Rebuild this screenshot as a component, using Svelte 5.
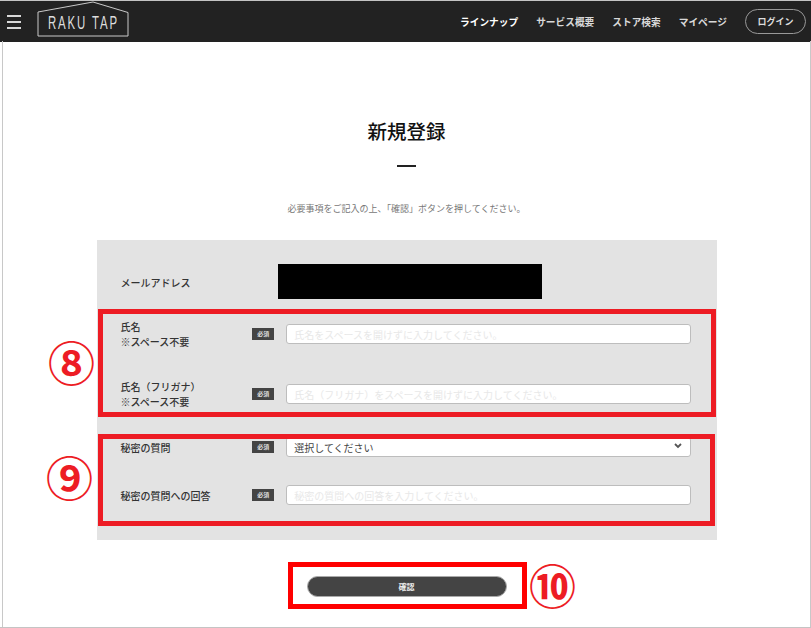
<script lang="ts">
  type Field = {
    label: string;
    note?: string;
    placeholder?: string;
    kind?: 'select';
  };

  const nav = ['ラインナップ', 'サービス概要', 'ストア検索', 'マイページ'];

  const fields: Field[] = [
    { label: '氏名', note: '※スペース不要', placeholder: '氏名をスペースを開けずに入力してください。' },
    { label: '氏名（フリガナ）', note: '※スペース不要', placeholder: '氏名（フリガナ）をスペースを開けずに入力してください。' },
    { label: '秘密の質問', kind: 'select', placeholder: '選択してください' },
    { label: '秘密の質問への回答', placeholder: '秘密の質問への回答を入力してください。' }
  ];
</script>

<div class="page">
  <header class="topbar">
    <button class="menu" aria-label="メニュー">
      <span></span><span></span><span></span>
    </button>
    <div class="logo">
      <svg width="92" height="36" viewBox="0 0 92 36" aria-hidden="true">
        <path d="M1 35V11L56 1L91 11.500V35Z" fill="none" stroke="#c9c9c9" stroke-width="1" />
      </svg>
      <span class="logo-text">RAKU TAP</span>
    </div>
    <nav class="nav">
      {#each nav as item, i}
        <span class:first={i === 0}>{item}</span>
      {/each}
    </nav>
    <button class="login">ログイン</button>
  </header>

  <main class="content">
    <h1>新規登録</h1>
    <div class="dash"></div>
    <p class="lead">必要事項をご記入の上、「確認」ボタンを押してください。</p>

    <section class="panel">
      <div class="mail-row">
        <div class="mail-label">メールアドレス</div>
        <div class="mail-mask"></div>
      </div>

      {#each fields as f, i}
        <div class="row row-{i}">
          <div class="label">
            <div>{f.label}</div>
            {#if f.note}<div>{f.note}</div>{/if}
          </div>
          <span class="req">必須</span>
          {#if f.kind === 'select'}
            <div class="input select">
              <span>{f.placeholder}</span>
              <svg width="8" height="6" viewBox="0 0 8 6" aria-hidden="true">
                <path d="M1 1L4 4L7 1" fill="none" stroke="#555" stroke-width="1.800" />
              </svg>
            </div>
          {:else}
            <input class="input" placeholder={f.placeholder} />
          {/if}
        </div>
      {/each}
    </section>

    <button class="confirm">確認</button>
  </main>

  <!-- annotations drawn over the screenshot -->
  <div class="mark box-8"></div>
  <div class="mark box-9"></div>
  <div class="mark box-10"></div>
  <span class="num num-8">⑧</span>
  <span class="num num-9">⑨</span>
  <span class="num num-10">⑩</span>
</div>

<style>
  :global(body) {
    margin: 0;
    background: #fff;
    font-family: "Noto Sans CJK JP", "Noto Sans", sans-serif;
  }

  .page {
    position: relative;
    width: 811px;
    height: 628px;
    box-sizing: border-box;
    overflow: hidden;
    border-top: 1px solid #c4c4c4;
    border-bottom: 1px solid #c4c4c4;
  }

  .page::before,
  .page::after {
    content: '';
    position: absolute;
    top: 40px;
    bottom: 0;
    width: 1px;
    background: #c8c8c8;
  }

  .page::before {
    left: 2px;
  }

  .page::after {
    right: 0;
  }

  .topbar {
    display: flex;
    align-items: center;
    height: 41px;
    background: #222;
    color: #fff;
    padding: 0 5px 0 7px;
  }

  .menu {
    display: flex;
    flex-direction: column;
    gap: 4px;
    width: 14px;
    padding: 0;
    border: 0;
    background: none;
  }

  .menu span {
    height: 2px;
    background: #d8d8d8;
  }

  .logo {
    position: relative;
    width: 92px;
    height: 36px;
    margin: -5px 0 0 16px;
  }

  .logo svg {
    display: block;
  }

  .logo-text {
    position: absolute;
    left: 11px;
    top: 12px;
    font-family: "Liberation Sans", sans-serif;
    font-size: 19px;
    line-height: 20px;
    letter-spacing: 3.100px;
    transform: scaleX(0.6);
    transform-origin: left;
    white-space: nowrap;
    color: #ddd;
  }

  .nav {
    display: flex;
    gap: 18px;
    margin-left: auto;
    font-size: 9.700px;
    font-weight: 700;
    color: #d8d8d8;
  }

  .nav .first {
    color: #fff;
  }

  .login {
    width: 61px;
    height: 25px;
    margin-left: 18px;
    border: 1px solid #999;
    border-radius: 13px;
    background: none;
    color: #ddd;
    font: 700 9px "Noto Sans CJK JP", sans-serif;
  }

  .content {
    display: flex;
    flex-direction: column;
    align-items: center;
    padding-left: 2px;
  }

  h1 {
    margin: 77px 0 0;
    font-size: 19.500px;
    line-height: 24px;
    font-weight: 500;
    color: #111;
  }

  .dash {
    width: 19px;
    height: 2px;
    margin-top: 22px;
    background: #222;
  }

  .lead {
    margin: 36px 0 0;
    font-size: 9px;
    line-height: 12px;
    color: #777;
  }

  .panel {
    box-sizing: border-box;
    width: 620px;
    height: 300px;
    margin-top: 25px;
    padding: 24px 25px 0 24px;
    background: #e3e3e3;
  }

  .mail-row {
    display: flex;
    align-items: center;
    height: 35px;
  }

  .mail-label,
  .label {
    font-size: 10px;
    font-weight: 500;
    color: #333;
  }

  .mail-label {
    width: 157px;
    padding-top: 2px;
  }

  .mail-mask {
    width: 264px;
    height: 35px;
    background: #000;
  }

  .row {
    display: flex;
    align-items: center;
    height: 20px;
  }

  .row-0 {
    margin-top: 25px;
  }

  .row-1 {
    margin-top: 40px;
  }

  .row-2 {
    margin-top: 33px;
  }

  .row-3 {
    margin-top: 28px;
  }

  .label {
    width: 132px;
    line-height: 15px;
  }

  .req {
    width: 22px;
    height: 12px;
    background: #444;
    color: #ddd;
    font-size: 6px;
    font-weight: 700;
    line-height: 12px;
    text-align: center;
  }

  .input {
    box-sizing: border-box;
    width: 406px;
    height: 20px;
    margin-left: 12px;
    padding: 0 7px;
    border: 1px solid #bdbdbd;
    border-radius: 3px;
    background: #fff;
    font: 10px "Noto Sans CJK JP", sans-serif;
    outline: none;
  }

  .input::placeholder {
    color: #e8e8e8;
  }

  .select {
    display: flex;
    align-items: center;
    justify-content: space-between;
    padding-right: 8px;
    color: #444;
  }

  .select svg {
    margin-top: -3px;
  }

  .confirm {
    width: 200px;
    height: 21px;
    margin-top: 36px;
    border: 1px solid #aaa;
    border-radius: 11px;
    background: #444;
    color: #eee;
    font: 700 8px "Noto Sans CJK JP", sans-serif;
  }

  .mark {
    position: absolute;
    box-sizing: border-box;
    border: 5px solid #ed1c24;
  }

  .box-8 {
    left: 98px;
    top: 308px;
    width: 618px;
    height: 108px;
  }

  .box-9 {
    left: 98px;
    top: 433px;
    width: 617px;
    height: 92px;
  }

  .box-10 {
    left: 288px;
    top: 561px;
    width: 239px;
    height: 47px;
    border-color: #f00;
  }

  .num {
    position: absolute;
    color: #ed1c24;
    font-size: 47px;
    font-weight: 700;
    line-height: 50px;
  }

  .num-8 {
    left: 48px;
    top: 335px;
  }

  .num-9 {
    left: 46px;
    top: 450px;
  }

  .num-10 {
    left: 529px;
    top: 558px;
  }
</style>
